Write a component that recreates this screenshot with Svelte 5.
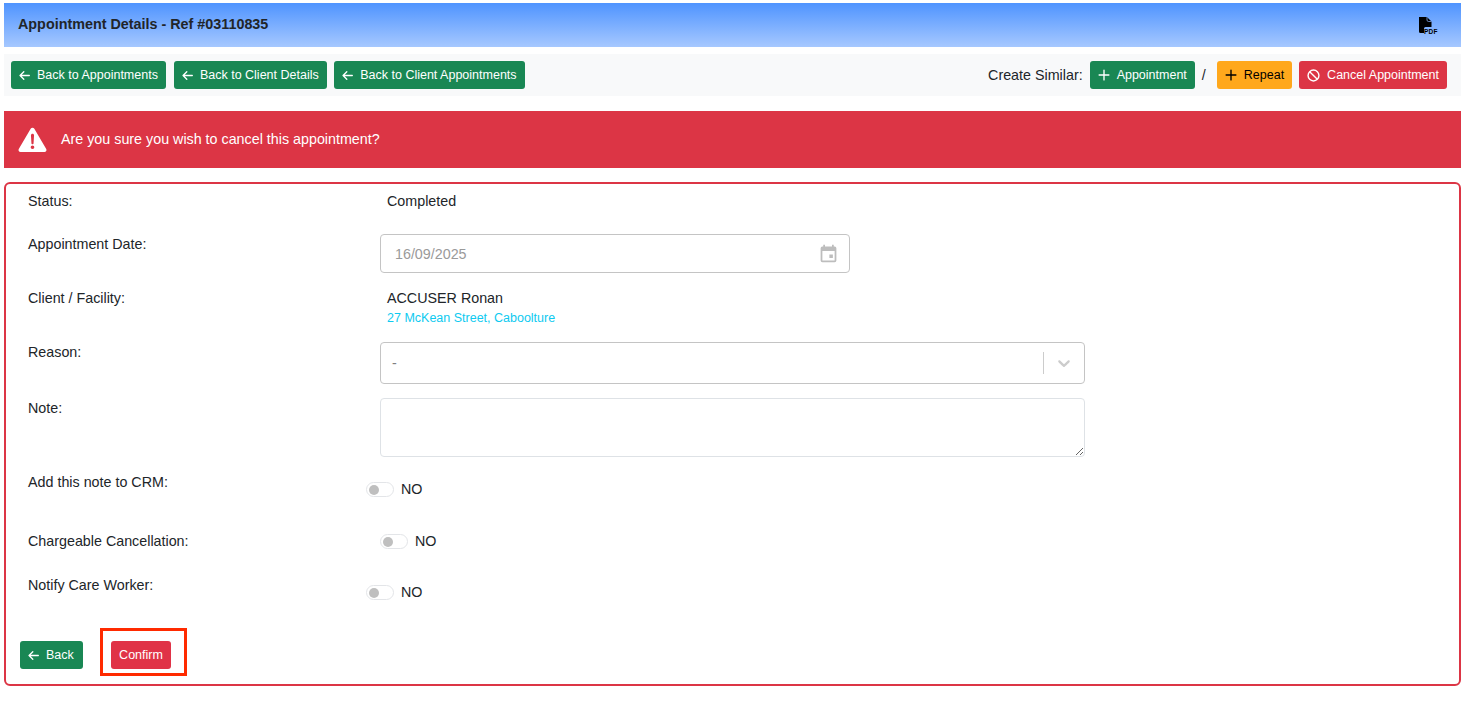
<script>
  const topLinks = ['Back to Appointments', 'Back to Client Details', 'Back to Client Appointments'];
</script>

{#snippet arrow()}
  <svg class="ic" viewBox="0 0 16 16" width="11" height="11" fill="none" stroke="currentColor" stroke-width="1.9" stroke-linecap="round" stroke-linejoin="round"><path d="M15 8H1.500M7 2.500 1.500 8 7 13.500"/></svg>
{/snippet}
{#snippet plus()}
  <svg class="ic" viewBox="0 0 16 16" width="12" height="12" fill="none" stroke="currentColor" stroke-width="1.8" stroke-linecap="round"><path d="M8 1.500v13M1.500 8h13"/></svg>
{/snippet}
{#snippet toggle()}
  <span class="toggle"><span class="knob"></span></span><span class="no">NO</span>
{/snippet}

<div class="page">
  <header class="head">
    <h1>Appointment Details - Ref #03110835</h1>
    <svg class="pdf" viewBox="0 0 20 18" width="20" height="18" aria-label="PDF">
      <path d="M3 1h8l4.500 4.500V11H9.500A1.500 1.500 0 0 0 8 12.500V17H4.500A1.500 1.500 0 0 1 3 15.500Z" fill="#000"/>
      <path d="M11 1v3a1.500 1.500 0 0 0 1.500 1.500h3" fill="none" stroke="#8fb8ff" stroke-width=".7"/>
      <text x="8" y="17.500" class="pdft">PDF</text>
    </svg>
  </header>

  <nav class="bar">
    <div class="group">
      {#each topLinks as t}
        <button class="btn green">{@render arrow()}{t}</button>
      {/each}
    </div>
    <div class="group right">
      <span class="similar">Create Similar:</span>
      <button class="btn green">{@render plus()}Appointment</button>
      <span class="slash">/</span>
      <button class="btn amber">{@render plus()}Repeat</button>
      <button class="btn red">
        <svg class="ic" viewBox="0 0 16 16" width="13" height="13" fill="none" stroke="currentColor" stroke-width="1.700"><circle cx="8" cy="8" r="6.700"/><path d="M3.300 3.300l9.400 9.400"/></svg>
        Cancel Appointment
      </button>
    </div>
  </nav>

  <div class="alert">
    <svg viewBox="0 0 30 26" width="29" height="25" preserveAspectRatio="none"><path fill-rule="evenodd" fill="#fff" d="M15 .8c.8 0 1.500.4 1.900 1.100l12.300 21c.8 1.400-.2 3-1.800 3H2.600c-1.600 0-2.600-1.600-1.800-3l12.300-21C13.500 1.200 14.200.8 15 .8Zm-1.600 7.700.5 8.500c0 .6.500 1 1.100 1s1.100-.4 1.100-1l.5-8.500c0-.9-.7-1.600-1.600-1.600s-1.600.7-1.600 1.600ZM15 19.200a1.900 1.900 0 1 0 0 3.800 1.900 1.900 0 0 0 0-3.800Z"/></svg>
    <span class="alert-text">Are you sure you wish to cancel this appointment?</span>
  </div>

  <section class="card">
    <div class="row status">
      <label>Status:</label>
      <div class="val">Completed</div>
    </div>
    <div class="row date">
      <label>Appointment Date:</label>
      <div class="field datefield">
        <span class="dateval">16/09/2025</span>
        <svg viewBox="0 0 24 24" width="21" height="21" fill="#bdbdbd"><path d="M19 4h-1V2h-2v2H8V2H6v2H5a2 2 0 0 0-2 2v14a2 2 0 0 0 2 2h14a2 2 0 0 0 2-2V6a2 2 0 0 0-2-2Zm0 16H5V9h14Zm-6-7h4v4h-4Z" /></svg>
      </div>
    </div>
    <div class="row client">
      <label>Client / Facility:</label>
      <div class="val">
        ACCUSER Ronan
        <div class="addr">27 McKean Street, Caboolture</div>
      </div>
    </div>
    <div class="row reason">
      <label>Reason:</label>
      <div class="field select">
        <span class="dash">-</span>
        <span class="sep"></span>
        <svg viewBox="0 0 20 20" width="20" height="20" fill="#cccccc"><path d="M4.516 7.548c.436-.446 1.043-.481 1.576 0L10 11.295l3.908-3.747c.533-.481 1.141-.446 1.574 0 .436.445.408 1.197 0 1.615-.406.418-4.695 4.502-4.695 4.502a1.095 1.095 0 0 1-1.576 0S4.924 9.581 4.516 9.163c-.409-.418-.436-1.170 0-1.615Z"/></svg>
      </div>
    </div>
    <div class="row note">
      <label for="note">Note:</label>
      <textarea id="note"></textarea>
    </div>
    <div class="row crm">
      <label>Add this note to CRM:</label>
      <div class="sw shifted">{@render toggle()}</div>
    </div>
    <div class="row charge">
      <label>Chargeable Cancellation:</label>
      <div class="sw">{@render toggle()}</div>
    </div>
    <div class="row notify">
      <label>Notify Care Worker:</label>
      <div class="sw shifted">{@render toggle()}</div>
    </div>
    <div class="actions">
      <button class="btn green back">{@render arrow()}Back</button>
      <div class="highlight"><button class="btn red confirm">Confirm</button></div>
    </div>
  </section>
</div>

<style>
  :global(body) {
    margin: 0;
    background: #fff;
    font-family: "Liberation Sans", Arial, sans-serif;
    color: #212529;
    font-size: 14.3px;
  }
  .page {
    padding: 3px 7px 0 4px;
  }
  .head {
    height: 44px;
    box-sizing: border-box;
    display: flex;
    align-items: center;
    justify-content: space-between;
    padding: 0 25px 0 14px;
    background: linear-gradient(#4f94ff, #a6c8ff);
  }
  h1 {
    margin: -1px 0 0;
    font-size: 14.35px;
    font-weight: 700;
    line-height: 1;
  }
  .pdf { display: block; overflow: visible; }
  .pdft {
    font: 700 6.5px "Liberation Sans", sans-serif;
    letter-spacing: 0.2px;
    fill: #000;
  }
  .bar {
    margin-top: 7px;
    height: 42px;
    box-sizing: border-box;
    background: #f8f9fa;
    display: flex;
    align-items: center;
    justify-content: space-between;
    padding: 0 14px 0 7px;
  }
  .group {
    display: flex;
    align-items: center;
    gap: 7.5px;
  }
  .group:not(.right) .btn:first-child { margin-right: 0.5px; }
  .right { gap: 7px; }
  .slash { margin-right: 4px; }
  .btn {
    height: 28px;
    box-sizing: border-box;
    border: 0;
    border-radius: 3px;
    padding: 0 8px;
    display: inline-flex;
    align-items: center;
    gap: 7px;
    font: 12.5px "Liberation Sans", Arial, sans-serif;
    white-space: nowrap;
  }
  .ic { flex: none; }
  .green { background: #198754; color: #fff; }
  .amber { background: #ffa81c; color: #000; }
  .red { background: #dc3545; color: #fff; }
  .alert {
    margin-top: 15px;
    height: 57px;
    background: #dc3545;
    color: #fff;
    display: flex;
    align-items: center;
    gap: 14px;
    padding-left: 14px;
  }
  .alert-text { margin-top: -2px; }
  .card {
    margin-top: 14px;
    height: 504px;
    box-sizing: border-box;
    border: 2px solid #dc3545;
    border-radius: 6px;
    padding: 0 0 0 22px;
    display: flex;
    flex-direction: column;
  }
  .row {
    display: grid;
    grid-template-columns: 352px 1fr;
    line-height: 17px;
  }
  label { display: block; }
  .val { padding-left: 7px; }
  .status { padding-top: 9px; }
  .date { margin-top: 24px; }
  .date label { padding-top: 2px; }
  .dateval { padding-top: 2px; }
  .client { margin-top: 17px; }
  .addr {
    font-size: 12.5px;
    line-height: 14px;
    margin-top: 4px;
    color: #0dcaf0;
  }
  .reason { margin-top: 17px; }
  .reason label { padding-top: 2px; }
  .note { margin-top: 14px; }
  .note label { padding-top: 2px; }
  .field {
    box-sizing: border-box;
    border: 1px solid #c4c4c4;
    border-radius: 4px;
    display: flex;
    align-items: center;
    color: #9a9a9a;
  }
  .datefield {
    width: 470px;
    height: 39px;
    padding: 0 10px 0 14px;
    justify-content: space-between;
  }
  .select {
    width: 705px;
    height: 42px;
    padding: 0 10px 0 11px;
  }
  .dash { flex: 1; color: #808080; }
  .sep {
    width: 1px;
    height: 22px;
    background: #cccccc;
    margin-right: 10px;
  }
  textarea {
    display: block;
    width: 705px;
    height: 59px;
    box-sizing: border-box;
    border: 1px solid #dee2e6;
    border-radius: 4px;
    margin: 0;
    padding: 6px 12px;
    background: #fff;
    font: inherit;
    outline: none;
  }
  .crm { margin-top: 17px; }
  .charge { margin-top: 35px; }
  .notify { margin-top: 27px; }
  .sw {
    display: flex;
    align-items: center;
    gap: 7px;
    height: 17px;
  }
  .crm .sw, .notify .sw { margin-top: 7px; }
  .shifted { margin-left: -14px; }
  .toggle {
    width: 28px;
    height: 15px;
    box-sizing: border-box;
    border: 1px solid #e3e5e8;
    border-radius: 8px;
    background: #fff;
    display: flex;
    align-items: center;
    padding-left: 2px;
  }
  .knob {
    width: 10px;
    height: 10px;
    border-radius: 50%;
    background: #bfbfbf;
  }
  .actions {
    margin-top: 27px;
    display: flex;
    align-items: flex-start;
    margin-left: -8px;
    gap: 17px;
  }
  .back { margin-top: 13px; width: 63px; }
  .highlight {
    border: 3px solid #ff2a00;
    padding: 10px 13px 4px 8px;
    width: 87px;
    box-sizing: border-box;
  }
  .confirm {
    display: flex;
    width: 60px;
    justify-content: center;
    padding: 0;
    background: #e03347;
  }
</style>
